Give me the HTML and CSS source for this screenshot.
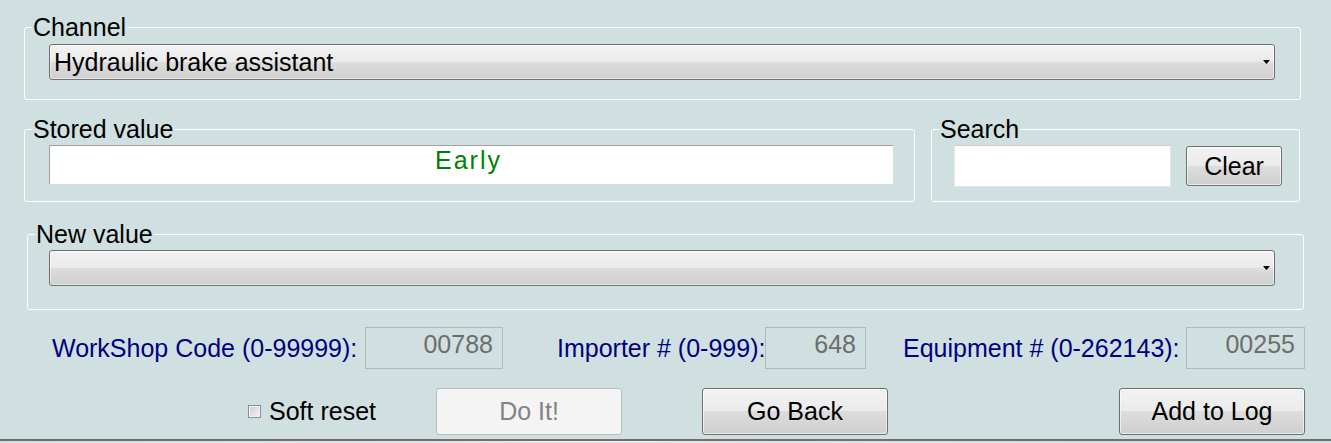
FILE: index.html
```html
<!doctype html>
<html>
<head>
    <title>Adaptation</title>
    <link rel="stylesheet" href="styles.css">
</head>
<body>

<fieldset class="group" id="channel">
    <legend>Channel</legend>
    <div class="inner">
        <div class="combo">
            <span>Hydraulic brake assistant</span>
            <svg class="arrow" width="7" height="5" viewBox="0 0 7 5"><path d="M0 0H7L3.5 4Z" fill="#000"/></svg>
        </div>
    </div>
</fieldset>

<div class="row2">
    <fieldset class="group" id="stored">
        <legend>Stored value</legend>
        <div class="inner">
            <input type="text" class="stored-box" value="Early" readonly>
        </div>
    </fieldset>
    <fieldset class="group" id="search">
        <legend>Search</legend>
        <div class="inner">
            <input type="text" class="search-box">
            <button class="btn" id="clear">Clear</button>
        </div>
    </fieldset>
</div>

<fieldset class="group" id="newvalue">
    <legend>New value</legend>
    <div class="inner">
        <div class="combo">
            <svg class="arrow" width="7" height="5" viewBox="0 0 7 5"><path d="M0 0H7L3.5 4Z" fill="#000"/></svg>
        </div>
    </div>
</fieldset>

<div class="fields">
    <div class="field" id="f1">
        <label>WorkShop Code (0-99999):</label>
        <input type="text" class="code" value="00788" readonly>
    </div>
    <div class="field" id="f2">
        <label>Importer # (0-999):</label>
        <input type="text" class="code" value="648" readonly>
    </div>
    <div class="field" id="f3">
        <label>Equipment # (0-262143):</label>
        <input type="text" class="code" value="00255" readonly>
    </div>
</div>

<div class="actions">
    <div class="check"><span class="tick"></span>Soft reset</div>
    <button class="btn" id="doit" disabled>Do It!</button>
    <button class="btn" id="goback">Go Back</button>
    <button class="btn" id="addlog">Add to Log</button>
</div>

<div class="status"></div>

</body>
</html>
```

FILE: styles.css
```css
body {
    margin: 0;
    background-color: #d0e0e0;
    font-family: "Liberation Sans", Arial, sans-serif;
    font-size: 25px;
    color: #000;
    overflow: hidden;
}

/* group boxes */
.group {
    margin: 0;
    padding: 0;
    min-width: 0;
    box-sizing: border-box;
    border: 1px solid #fff;
    border-radius: 3px;
}
.group legend {
    margin-left: 7px;
    padding: 0 1px;
    line-height: 29px;
}
#channel {
    margin: 13px 0 0 24px;
    width: 1277px;
}
#channel .inner {
    padding: 2px 25px 19px 24px;
}
#newvalue {
    margin: 18px 0 0 27px;
    width: 1277px;
}
#newvalue .inner {
    padding: 1px 28px 23px 21px;
}

.combo {
    display: flex;
    align-items: center;
    height: 36px;
    box-sizing: border-box;
    padding: 0 4px 0 4px;
    line-height: 29px;
    border: 1px solid #707070;
    border-radius: 3px;
    background: linear-gradient(#f2f2f2, #ebebeb 50%, #dddddd 50%, #cfcfcf);
    box-shadow: inset 0 0 0 1px rgba(255,255,255,0.5);
}
.combo .arrow {
    margin-left: auto;
}

.row2 {
    display: flex;
    margin: 15px 0 0 24px;
}
#stored {
    width: 891px;
}
#stored .inner {
    padding: 1px 21px 17px 24px;
}
.stored-box {
    display: block;
    width: 844px;
    height: 39px;
    box-sizing: border-box;
    margin: 0;
    padding: 0 6px 10px 0;
    border: none;
    border-top: 1px solid #a0a0a0;
    border-left: 1px solid #a0a0a0;
    background: #fff;
    font-family: "Liberation Sans", Arial, sans-serif;
    font-size: 25px;
    letter-spacing: 2px;
    color: #008000;
    text-align: center;
    outline: none;
}
#search {
    width: 369px;
    margin-left: 16px;
}
#search .inner {
    display: flex;
    align-items: center;
    padding: 1px 17px 14px 22px;
}
.search-box {
    width: 217px;
    height: 42px;
    box-sizing: border-box;
    margin: 0;
    border: 1px solid #e1e6e6;
    border-top-color: #c9cdcd;
    background: #fff;
    font: inherit;
    outline: none;
}

/* buttons */
.btn {
    margin: 0;
    padding: 0;
    font: inherit;
    line-height: 29px;
    color: #000;
    border: 1px solid #707070;
    border-radius: 3px;
    background: linear-gradient(#f2f2f2, #ebebeb 50%, #dddddd 50%, #cfcfcf);
    box-shadow: inset 0 0 0 1px rgba(255,255,255,0.6);
}
.btn:disabled {
    border-color: #b8bcbe;
    background: #f4f4f4;
    color: #838383;
    box-shadow: none;
}
#clear {
    width: 96px;
    height: 40px;
    margin-left: 15px;
}

/* codes row */
.fields {
    display: flex;
    align-items: center;
    margin: 17px 0 0 52px;
    color: #000080;
}
.field {
    display: flex;
    align-items: center;
}
.field label {
    white-space: nowrap;
    line-height: 29px;
}
.code {
    height: 42px;
    box-sizing: border-box;
    margin: 0;
    padding: 0 9px 7px 0;
    border: 1px solid #b3b9ba;
    background: transparent;
    font: inherit;
    color: #6d6d6d;
    text-align: right;
    outline: none;
}
#f1 label { width: 313px; }
#f1 .code { width: 138px; }
#f2 { margin-left: 54px; }
#f2 label { width: 208px; }
#f2 .code { width: 101px; }
#f3 { margin-left: 37px; }
#f3 label { width: 283px; }
#f3 .code { width: 119px; }

/* bottom row */
.actions {
    display: flex;
    align-items: center;
    margin: 19px 0 0 248px;
}
.check {
    display: flex;
    align-items: center;
    width: 188px;
    line-height: 29px;
}
.tick {
    width: 13px;
    height: 13px;
    box-sizing: border-box;
    margin: -1px 8px 0 0;
    border: 1px solid #8f8f8f;
    background: linear-gradient(135deg, #cbcbcb, #f6f6f6);
    box-shadow: inset 0 0 0 1px #f2f2f2;
}
.actions .btn {
    width: 186px;
    height: 47px;
}
#goback { margin-left: 80px; }
#addlog { margin-left: 231px; }

.status {
    margin-top: 4px;
    height: 10px;
    border-top: 2px solid #6f6f6f;
    background: linear-gradient(to right, #d3dcdc, #e9e9e9 45%, #d3dcdc 80%);
}
```
